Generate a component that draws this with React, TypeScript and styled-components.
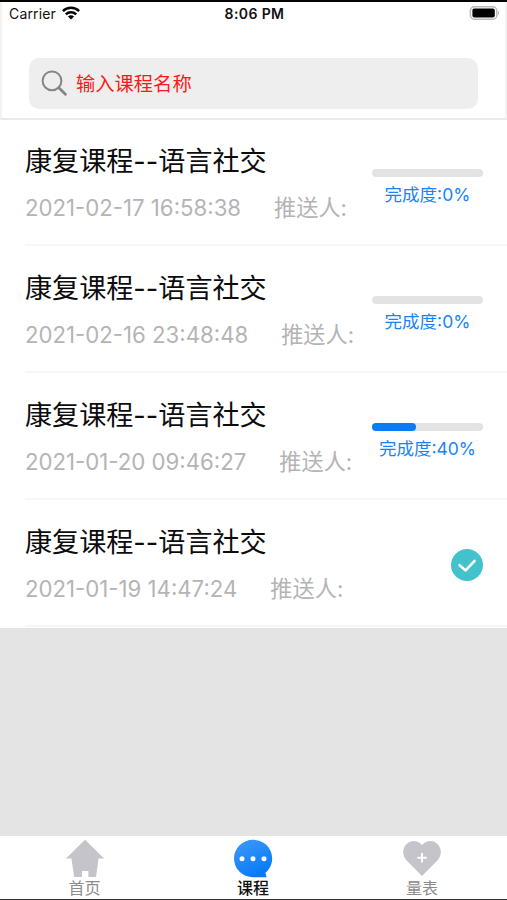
import React from "react";
import styled, { createGlobalStyle } from "styled-components";

const GlobalStyle = createGlobalStyle`
  * { box-sizing: border-box; }
  body {
    margin: 0;
    background: #e4e4e4;
    font-family: Inter, "Noto Sans CJK SC", sans-serif;
  }
`;

const Screen = styled.div`
  display: flex;
  flex-direction: column;
  width: 507px;
  height: 900px;
  overflow: hidden;
  background: #e4e4e4;
  border-top: 2px solid #050505;
  border-bottom: 1px solid #333;
`;

const Header = styled.header`
  flex: none;
  height: 118px;
  background: #fff;
  border: 2px solid #f2f2f2;
  border-top: 0;
  border-bottom: 2px solid #e9e9e9;
`;

const StatusBar = styled.div`
  display: grid;
  grid-template-columns: 1fr auto 1fr;
  align-items: center;
  height: 22px;
  padding: 0 5px 0 7px;
  font-size: 14px;
  color: #111;
`;

const Carrier = styled.div`
  display: flex;
  align-items: center;
  gap: 6px;
  letter-spacing: 0.15px;
`;

const Clock = styled.div`
  font-weight: 600;
  font-size: 14px;
  letter-spacing: 0.4px;
`;

const BatteryIcon = styled.svg`
  justify-self: end;
`;

const SearchField = styled.label`
  display: flex;
  align-items: center;
  gap: 9px;
  width: 449px;
  height: 51px;
  margin: 34px 0 0 27px;
  padding-left: 12px;
  border-radius: 10px;
  background: #eee;
`;

const SearchIcon = styled.svg`
  margin-top: -1px;
`;

const SearchInput = styled.input`
  flex: 1;
  min-width: 0;
  height: 30px;
  padding: 0;
  border: 0;
  outline: 0;
  background: transparent;
  font: 19.3px Inter, "Noto Sans CJK SC", sans-serif;
  &::placeholder { color: #fc1818; opacity: 1; }
`;

const List = styled.main`
  flex: none;
  padding-bottom: 1px;
  background: #fff;
`;

const Row = styled.article`
  display: flex;
  justify-content: space-between;
  height: 127px;
  margin-left: 25px;
  padding: 1px 24px 0 0;
  border-bottom: 2px solid #f6f6f6;
  &:first-child {
    height: 126px;
    padding-top: 0;
  }
`;

const Info = styled.div`
  display: flex;
  flex-direction: column;
  padding-top: 22px;
`;

const Title = styled.h2`
  margin: 0;
  font-size: 27.1px;
  font-weight: 400;
  line-height: 40px;
  color: #0c0c0c;
  white-space: nowrap;
`;

const Meta = styled.div`
  display: flex;
  gap: 33px;
  margin-top: 11px;
  font-size: 22.2px;
  line-height: 30px;
  color: #b4b4b4;
  white-space: nowrap;
`;

const Progress = styled.div`
  display: flex;
  flex-direction: column;
  align-items: center;
  gap: 4px;
  width: 111px;
  padding-top: 49px;
`;

const Track = styled.div`
  width: 111px;
  height: 8px;
  border-radius: 4px;
  background: #e3e3e3;
`;

const Fill = styled.div`
  height: 8px;
  border-radius: 4px;
  background: #087bf8;
`;

const Percent = styled.div`
  font-size: 17.5px;
  line-height: 28px;
  color: #1683fa;
  white-space: nowrap;
`;

const DoneIcon = styled.svg`
  align-self: center;
  margin-top: 3px;
`;

const TabBar = styled.nav`
  display: grid;
  grid-template-columns: repeat(3, 1fr);
  height: 63px;
  margin-top: auto;
  background: #fff;
`;

const Tab = styled.div<{ $active?: boolean }>`
  display: flex;
  flex-direction: column;
  align-items: center;
  padding-top: 3px;
  padding-right: 1px;
  font-size: 16px;
  line-height: 18px;
  font-weight: ${(p) => (p.$active ? 500 : 400)};
  color: ${(p) => (p.$active ? "#111" : "#8c8c8c")};
  &:first-child { padding-right: 0; }
`;

type Course = { time: string; progress: number };

const courses: Course[] = [
  { time: "2021-02-17 16:58:38", progress: 0 },
  { time: "2021-02-16 23:48:48", progress: 0 },
  { time: "2021-01-20 09:46:27", progress: 40 },
  { time: "2021-01-19 14:47:24", progress: 100 },
];

const CourseRow = ({ time, progress }: Course) => (
  <Row>
    <Info>
      <Title>康复课程--语言社交</Title>
      <Meta>
        <span>{time}</span>
        <span>推送人:</span>
      </Meta>
    </Info>
    {progress === 100 ? (
      <DoneIcon width="32" height="32" viewBox="0 0 32 32">
        <circle cx="16" cy="16" r="16" fill="#42c3cc" />
        <path d="M8.6 16.2l6 5.2 9-9.6" fill="none" stroke="#fff" strokeWidth="2.6" strokeLinecap="round" strokeLinejoin="round" />
      </DoneIcon>
    ) : (
      <Progress>
        <Track>{progress > 0 && <Fill style={{ width: `${progress}%` }} />}</Track>
        <Percent>完成度:{progress}%</Percent>
      </Progress>
    )}
  </Row>
);

const WifiIcon = () => (
  <svg width="18" height="14" viewBox="0 0 18 14">
    <g fill="none" stroke="#050505" strokeWidth="2.5">
      <path d="M0.9 5.1a11.5 11.5 0 0 1 16.2 0" />
      <path d="M3.8 8.3a7.4 7.4 0 0 1 10.4 0" />
    </g>
    <path d="M9 13.6L5.9 10.5a4.4 4.4 0 0 1 6.2 0z" fill="#050505" />
  </svg>
);

export default function App() {
  return (
    <Screen>
      <GlobalStyle />
      <Header>
        <StatusBar>
          <Carrier>
            Carrier
            <WifiIcon />
          </Carrier>
          <Clock>8:06 PM</Clock>
          <BatteryIcon width="31" height="14" viewBox="0 0 31 14">
            <rect x="1.4" y="0.8" width="26.4" height="12.4" rx="4" fill="#fff" stroke="#b9b9b9" strokeWidth="1.5" />
            <rect x="3.4" y="2.6" width="22.4" height="9" rx="2" fill="#000" />
            <path d="M29.2 4.8q2 2.2 0 4.4z" fill="#aaa" />
          </BatteryIcon>
        </StatusBar>
        <SearchField>
          <SearchIcon width="26" height="26" viewBox="0 0 26 26" fill="none" stroke="#858585">
            <circle cx="11" cy="10.8" r="9.4" strokeWidth="2" />
            <path d="M17.8 17.8l6.6 6.4" strokeWidth="2.8" strokeLinecap="round" />
          </SearchIcon>
          <SearchInput placeholder="输入课程名称" />
        </SearchField>
      </Header>
      <List>
        {courses.map((c) => (
          <CourseRow key={c.time} {...c} />
        ))}
      </List>
      <TabBar>
        <Tab>
          <svg width="40" height="40" viewBox="0 0 40 40">
            <path d="M20 0.8L39 19.6H33.6L31 38H23.4V32H17V38H9.2L6.4 19.6H1z" fill="#c5c4ca" />
          </svg>
          首页
        </Tab>
        <Tab $active>
          <svg width="40" height="40" viewBox="0 0 40 40">
            <defs>
              <linearGradient id="bubble" x1="0" y1="0" x2="0.5" y2="1">
                <stop offset="0" stopColor="#3f9cf8" />
                <stop offset="1" stopColor="#087af8" />
              </linearGradient>
            </defs>
            <path d="M20 0.8A19 18.7 0 1 0 20 38.2H33.6L32.4 33.8A19 18.7 0 0 0 20 0.8z" fill="url(#bubble)" />
            <circle cx="9" cy="19.8" r="2.5" fill="#fff" />
            <circle cx="20" cy="19.8" r="2.5" fill="#fff" />
            <circle cx="31" cy="19.8" r="2.5" fill="#fff" />
          </svg>
          课程
        </Tab>
        <Tab>
          <svg width="40" height="40" viewBox="0 0 40 40">
            <path d="M20 37L4.6 21.6C-0.5 16.2 0.4 8 5.4 4.2C10 0.9 16 1.5 20 6C24 1.5 30 0.9 34.6 4.2C39.6 8 40.5 16.2 35.4 21.6z" fill="#c5c4ca" />
            <path d="M20 14v9.4M15.3 18.7h9.4" stroke="#fff" strokeWidth="2" />
          </svg>
          量表
        </Tab>
      </TabBar>
    </Screen>
  );
}
